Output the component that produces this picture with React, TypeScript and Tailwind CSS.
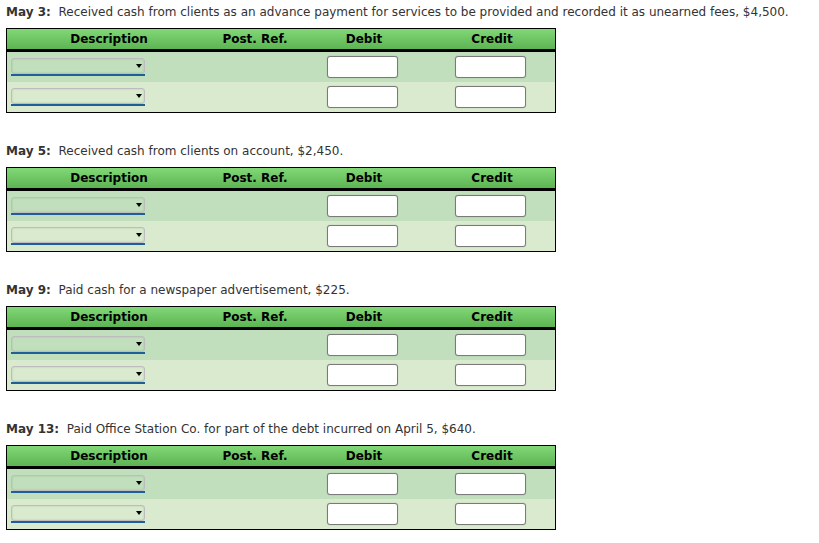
const entries = [
  { label: 'May 3:', text: 'Received cash from clients as an advance payment for services to be provided and recorded it as unearned fees, $4,500.' },
  { label: 'May 5:', text: 'Received cash from clients on account, $2,450.' },
  { label: 'May 9:', text: 'Paid cash for a newspaper advertisement, $225.' },
  { label: 'May 13:', text: 'Paid Office Station Co. for part of the debt incurred on April 5, $640.' },
];

function SelectBox() {
  return (
    <div className="relative w-[134px] h-[18px] ml-[4px]">
      <div className="absolute inset-x-0 top-0 h-[16px] rounded-[3px] border border-[#bdbdbd] shadow-[inset_0_0_2px_rgba(0,0,0,0.15)]" />
      <div className="absolute right-[3px] top-[6px] w-0 h-0 border-l-[3px] border-r-[3px] border-t-[4px] border-l-transparent border-r-transparent border-t-black" />
      <div className="absolute inset-x-0 bottom-0 h-[2px] bg-[#1f5f99]" />
    </div>
  );
}

function AmountInput() {
  return (
    <div className="w-[71px] h-[22px] bg-white rounded-[3px] border border-[#7a7a7a] shadow-[0_0_1px_rgba(0,0,0,0.3)]" />
  );
}

function Row({ bg }: { bg: string }) {
  return (
    <div className={`flex h-[30px] items-center ${bg}`}>
      <div className="w-[204px] flex items-center">
        <SelectBox />
      </div>
      <div className="w-[88px]" />
      <div className="w-[126px] flex justify-center">
        <AmountInput />
      </div>
      <div className="flex-1 flex justify-center">
        <AmountInput />
      </div>
    </div>
  );
}

export default function App() {
  return (
    <div className="bg-white w-[819px] h-[543px] pl-[6px] pt-[4px] text-[12px] text-[#333]" style={{ fontFamily: '"DejaVu Sans", Verdana, sans-serif' }}>
      {entries.map((e, i) => (
        <div key={i} className={i === 0 ? '' : 'mt-[30px]'}>
          <div className="h-[17px] leading-[17px] mb-[7px] whitespace-nowrap">
            <span className="font-bold">{e.label}</span>
            <span>&nbsp; {e.text}</span>
          </div>
          <div className="w-[550px] border border-black">
            <div className="flex h-[23px] items-center font-bold text-black bg-gradient-to-b from-[#82d876] to-[#5db453] border-b-[3px] border-black">
              <div className="w-[204px] text-center">Description</div>
              <div className="w-[88px] text-center">Post. Ref.</div>
              <div className="w-[130px] text-center">Debit</div>
              <div className="flex-1 text-center">Credit</div>
            </div>
            <Row bg="bg-[#c1dfbc]" />
            <Row bg="bg-[#d9eace]" />
          </div>
        </div>
      ))}
    </div>
  );
}
